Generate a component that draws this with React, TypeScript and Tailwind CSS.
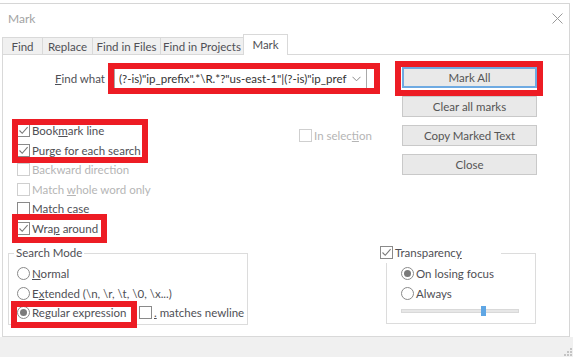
import React from 'react';

const Check = ({ checked = false, disabled = false }: { checked?: boolean; disabled?: boolean }) => (
  <span
    className={`flex h-[13px] w-[13px] shrink-0 items-center justify-center border bg-white ${
      disabled ? 'border-[#cfcfcf]' : 'border-[#8a8a8a]'
    }`}
  >
    {checked && (
      <svg width="11" height="11" viewBox="0 0 11 11">
        <polyline points="1.5,5.5 4.2,8.3 9.6,2.2" fill="none" stroke="#7a7a7a" strokeWidth="1.1" />
      </svg>
    )}
  </span>
);

const Radio = ({ selected = false }: { selected?: boolean }) => (
  <span className="flex h-[13px] w-[13px] shrink-0 items-center justify-center rounded-full border border-[#8a8a8a] bg-white">
    {selected && <span className="h-[7px] w-[7px] rounded-full bg-[#7a7a7a]" />}
  </span>
);

const CheckRow = ({
  children,
  checked,
  disabled,
}: {
  children: React.ReactNode;
  checked?: boolean;
  disabled?: boolean;
}) => (
  <div className={`flex h-[19.5px] items-center gap-[2px] ${disabled ? 'text-[#b5b5b5]' : ''}`}>
    <Check checked={checked} disabled={disabled} />
    <span className="whitespace-nowrap">{children}</span>
  </div>
);

const RadioRow = ({ children, selected }: { children: React.ReactNode; selected?: boolean }) => (
  <div className="flex h-[19.5px] items-center gap-[2px]">
    <Radio selected={selected} />
    <span className="whitespace-nowrap">{children}</span>
  </div>
);

const Btn = ({ label, focused }: { label: string; focused?: boolean }) => (
  <div
    className={`flex h-[21px] w-[135px] items-center justify-center bg-[#e9e9e9] text-[#555] ${
      focused ? 'border-2 border-[#6eaae2]' : 'border border-[#c9c9c9]'
    }`}
  >
    {label}
  </div>
);

const tabs = [
  { name: 'Find', w: 'w-[40px]' },
  { name: 'Replace', w: 'w-[50px]' },
  { name: 'Find in Files', w: 'w-[68px]' },
  { name: 'Find in Projects', w: 'w-[83px]' },
];

export default function App() {
  return (
    <div className="relative h-[357px] w-[573px] overflow-hidden bg-white font-['Lato',sans-serif] text-[11.5px] leading-none text-[#4f4f55]">
      <div className="h-[3px]" />
      <div className="flex h-[334px] w-[570px] flex-col border-r border-t border-[#d6d6d6]">
        {/* title bar */}
        <div className="flex h-[30px] items-start justify-between">
          <span className="pl-[8px] pt-[9px] text-[12px] text-[#a3a3a3]">Mark</span>
          <svg className="mr-[6px] mt-[9px]" width="11" height="11" viewBox="0 0 11 11">
            <path d="M0.5 0.5 L10.5 10.5 M10.5 0.5 L0.5 10.5" stroke="#9a9a9a" strokeWidth="1" />
          </svg>
        </div>

        {/* tabs */}
        <div className="relative z-10 flex h-[20px] items-end pl-[2px]">
          {tabs.map((t) => (
            <div
              key={t.name}
              className={`flex h-[17px] ${t.w} items-center justify-center whitespace-nowrap border-l border-t border-[#d9d9d9] bg-[#f0f0f0] pt-[1px] text-[#4f4f55]`}
            >
              {t.name}
            </div>
          ))}
          <div className="-mb-px flex h-[21px] w-[45px] items-start justify-center border-x border-t border-[#d9d9d9] bg-white pt-[4px]">
            Mark
          </div>
        </div>

        {/* panel */}
        <div className="ml-[2px] flex h-[283px] flex-col border-b border-l border-t border-[#d9d9d9]">
          <div className="flex">
            <div className="w-[399px]">
              <div className="mt-[13px] flex h-[21px] items-center">
                <span className="w-[102px] text-right">
                  <span className="underline">F</span>ind what
                </span>
                <div className="ml-[9px] flex h-[21px] w-[253px] items-center overflow-hidden border border-[#a9a9a9] bg-white pl-[4px]">
                  <span className="flex-1 overflow-hidden whitespace-nowrap leading-[17px] text-[#333]">
                    (?-is)"ip_prefix".*\R.*?"us-east-1"|(?-is)"ip_pref
                  </span>
                  <svg className="mx-[5px] shrink-0" width="9" height="6" viewBox="0 0 9 6">
                    <polyline points="0.5,0.8 4.5,4.8 8.5,0.8" fill="none" stroke="#8a8a8a" strokeWidth="1" />
                  </svg>
                </div>
              </div>

              <div className="mt-[32px] flex pl-[14px]">
                <div className="w-[282px]">
                  <CheckRow checked>
                    Book<span className="underline">m</span>ark line
                  </CheckRow>
                  <CheckRow checked>Purge for each search</CheckRow>
                  <CheckRow disabled>Backward direction</CheckRow>
                  <CheckRow disabled>
                    Match <span className="underline">w</span>hole word only
                  </CheckRow>
                  <CheckRow>Match case</CheckRow>
                  <CheckRow checked>
                    Wra<span className="underline">p</span> around
                  </CheckRow>
                </div>
                <div className="mt-[5px]">
                  <CheckRow disabled>
                    In selec<span className="underline">t</span>ion
                  </CheckRow>
                </div>
              </div>
            </div>

            <div className="flex flex-col gap-[8px] pt-[12px]">
              <Btn label="Mark All" focused />
              <Btn label="Clear all marks" />
              <Btn label="Copy Marked Text" />
              <Btn label="Close" />
            </div>
          </div>

          {/* group boxes */}
          <div className="mt-[15px] flex">
            <div className="relative ml-[5px] h-[72px] w-[240px] border border-[#dcdcdc] pl-[8px] pt-[10px]">
              <span className="absolute left-[5px] top-[-7px] bg-white px-[2px]">Search Mode</span>
              <RadioRow>
                <span className="underline">N</span>ormal
              </RadioRow>
              <RadioRow>
                E<span className="underline">x</span>tended (\n, \r, \t, \0, \x...)
              </RadioRow>
              <div className="flex">
                <div className="w-[122px]">
                  <RadioRow selected>
                    Re<span className="underline">g</span>ular expression
                  </RadioRow>
                </div>
                <CheckRow>
                  <span className="underline">.</span> matches newline
                </CheckRow>
              </div>
            </div>

            <div className="relative ml-[138px] h-[71px] w-[150px] border border-[#dcdcdc] pl-[14px] pt-[10px]">
              <div className="absolute left-[-7px] top-[-11px] w-[121px] bg-white">
                <CheckRow checked>
                  Transparenc<span className="underline">y</span>
                </CheckRow>
              </div>
              <RadioRow selected>On losing focus</RadioRow>
              <RadioRow>Always</RadioRow>
              <div className="relative mt-[6px] h-[4px] w-[118px] border border-[#d9d9d9] bg-[#e7e7e7]">
                <span className="absolute left-[79px] top-[-4px] h-[10px] w-[5px] bg-[#5fa6e4]" />
              </div>
            </div>
          </div>
        </div>
      </div>

      {/* bottom band */}
      <div className="flex h-[20px] items-end justify-end bg-[#f0f0f0] pb-[1px] pr-[1px]">
        <svg width="10" height="10" viewBox="0 0 10 10">
          {[
            [8, 0],
            [8, 3],
            [5, 3],
            [8, 6],
            [5, 6],
            [2, 6],
          ].map(([x, y]) => (
            <rect key={`${x}-${y}`} x={x} y={y + 2} width="2" height="2" fill="#c4c4c4" />
          ))}
        </svg>
      </div>

      {/* red annotation boxes */}
      <div className="pointer-events-none absolute left-[108px] top-[63px] h-[31px] w-[272px] border-[6px] border-[#ed1c24]" />
      <div className="pointer-events-none absolute left-[395px] top-[61px] h-[35px] w-[148px] border-[6px] border-[#ed1c24]" />
      <div className="pointer-events-none absolute left-[12px] top-[119px] h-[44px] w-[136px] border-[6px] border-[#ed1c24]" />
      <div className="pointer-events-none absolute left-[12px] top-[214px] h-[29px] w-[95px] border-[6px] border-[#ed1c24]" />
      <div className="pointer-events-none absolute left-[11px] top-[301px] h-[27px] w-[126px] border-[6px] border-[#ed1c24]" />
    </div>
  );
}
